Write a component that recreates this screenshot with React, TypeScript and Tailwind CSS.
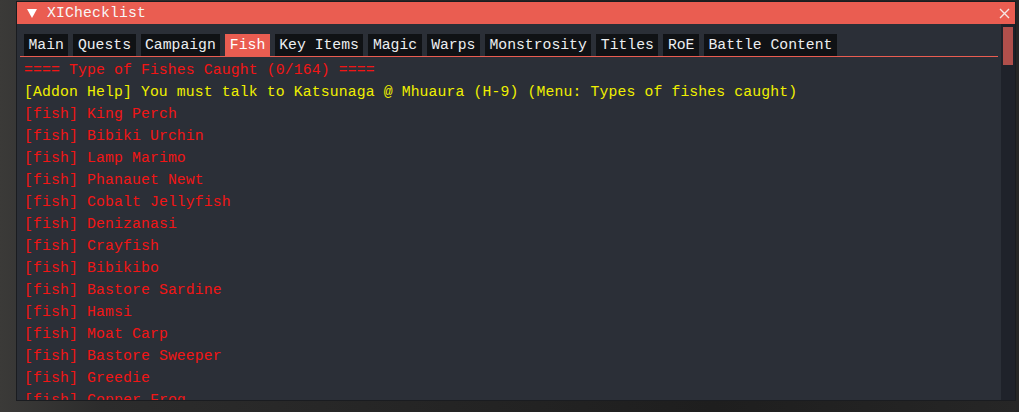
const tabs = [
  "Main",
  "Quests",
  "Campaign",
  "Fish",
  "Key Items",
  "Magic",
  "Warps",
  "Monstrosity",
  "Titles",
  "RoE",
  "Battle Content",
];

const fishes = [
  "King Perch",
  "Bibiki Urchin",
  "Lamp Marimo",
  "Phanauet Newt",
  "Cobalt Jellyfish",
  "Denizanasi",
  "Crayfish",
  "Bibikibo",
  "Bastore Sardine",
  "Hamsi",
  "Moat Carp",
  "Bastore Sweeper",
  "Greedie",
  "Copper Frog",
];

const App = () => {
  return (
    <div className="w-[1019px] h-[412px] overflow-hidden bg-[linear-gradient(90deg,#3b3a38_0%,#2c2c2c_10%,#1e1e1e_70%,#262626_100%)] pl-[17px] pt-[2px] font-['Liberation_Mono',monospace] text-[14.75px] leading-[22px]">
      <div className="w-[998px] h-[398px] overflow-hidden flex flex-col bg-[#2b2f37] shadow-[0_0_0_1px_#1a1c20]">
        {/* title bar */}
        <div className="h-[22px] shrink-0 bg-[#ea5d51] flex items-center text-[#f7f7f7]">
          <svg width="10" height="9" viewBox="0 0 10 9" className="ml-[10px]">
            <polygon points="0,0 10,0 5,9" fill="#ffffff" />
          </svg>
          <span className="ml-[10px] tracking-[0.14px]">XIChecklist</span>
          <svg width="11" height="11" viewBox="0 0 11 11" className="ml-auto mr-[5px]">
            <path d="M1 1 L10 10 M10 1 L1 10" stroke="#f6e6e4" strokeWidth="1.4" />
          </svg>
        </div>

        <div className="flex flex-1 min-h-0 overflow-hidden">
          <div className="flex-1 min-w-0 h-full overflow-hidden pl-[3px] pr-[3px] pt-[10px]">
            <div className="flex gap-[5px] ml-[4px] text-[#eceef0]">
              {tabs.map((t) => (
                <div
                  key={t}
                  className={
                    t === "Fish"
                      ? "h-[22px] px-[4.5px] bg-[#ea5d51] text-white"
                      : "h-[22px] px-[4.5px] bg-[#101215]"
                  }
                >
                  {t}
                </div>
              ))}
            </div>
            <div className="h-px bg-[#ea5d51]" />
            <div className="ml-[4px] mt-[2px] whitespace-pre tracking-[0.14px]">
              <div className="text-[#f21515]">==== Type of Fishes Caught (0/164) ====</div>
              <div className="text-[#f0f000]">
                [Addon Help] You must talk to Katsunaga @ Mhuaura (H-9) (Menu: Types of fishes caught)
              </div>
              {fishes.map((f) => (
                <div key={f} className="text-[#f21515]">
                  [fish] {f}
                </div>
              ))}
            </div>
          </div>

          {/* scrollbar */}
          <div className="w-[14px] shrink-0 bg-[#1f222a] pt-[3px] px-[2px]">
            <div className="h-[38px] bg-[#b04f4b]" />
          </div>
        </div>
      </div>
    </div>
  );
};

export default App;
